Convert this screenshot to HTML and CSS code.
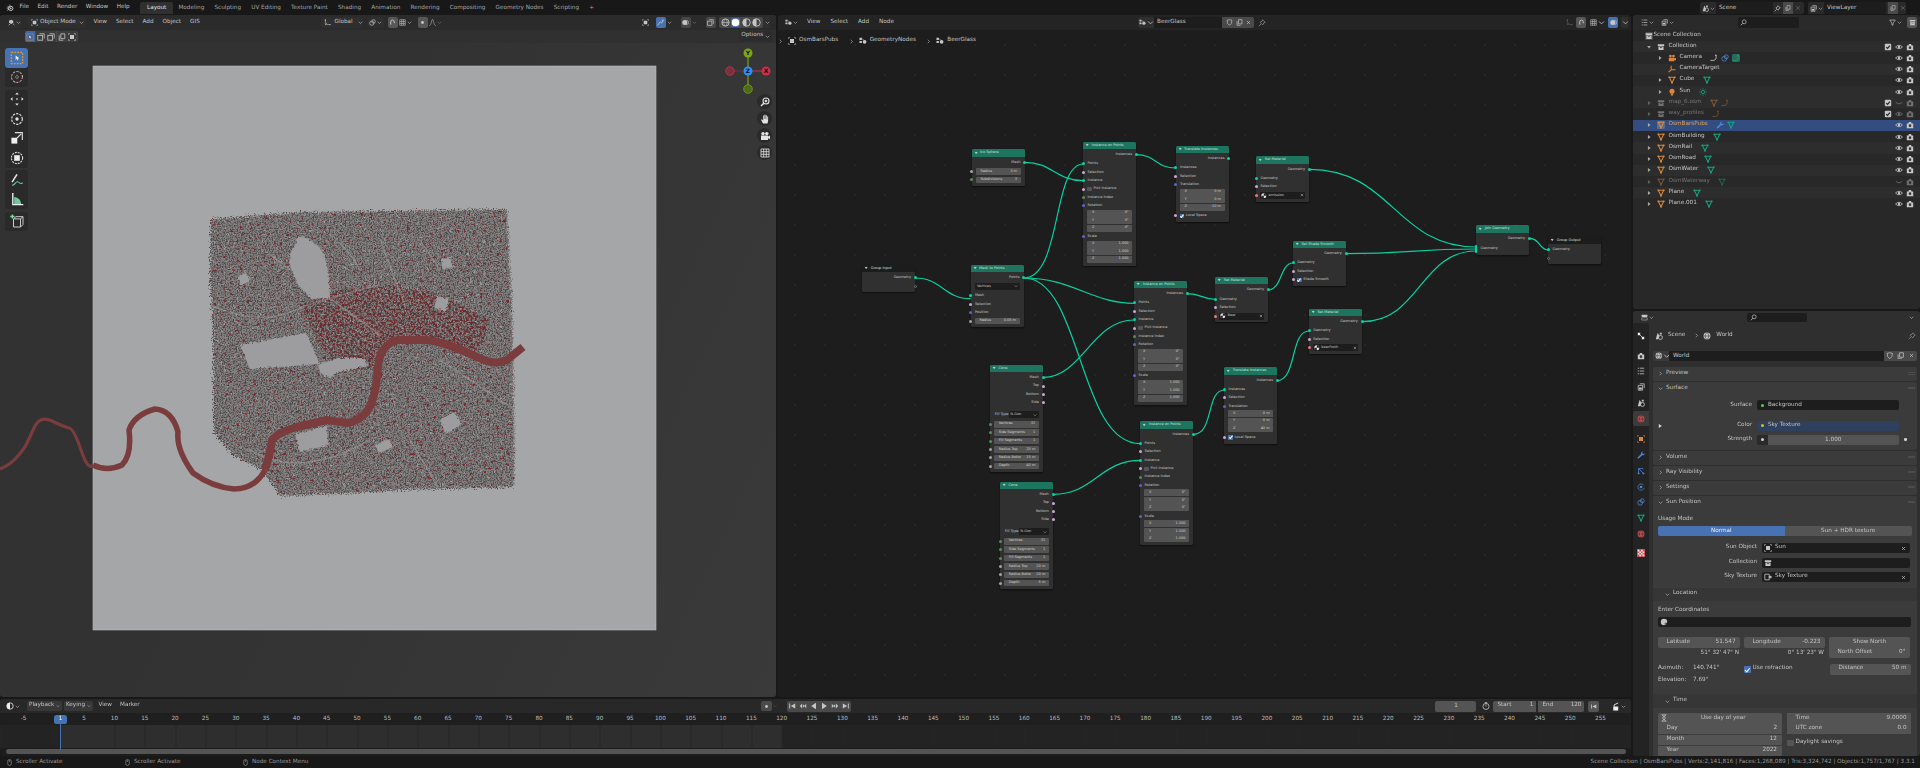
FILE: index.html
```html
<!DOCTYPE html>
<html lang="en">
<head>
<meta charset="utf-8">
<title>Blender</title>
<link rel="stylesheet" href="styles.css">
</head>
<body>
<svg class="sprite" aria-hidden="true">
<symbol id="collection" viewBox="0 0 10 10"><path fill="currentColor" d="M1 1.5h8v2.2H1zM1.8 4.3h6.4v4.5H1.8z"/><path fill="#222" d="M3.6 5.2h2.8V6H3.6z"/></symbol>
<symbol id="mesh" viewBox="0 0 10 10"><path fill="none" stroke="currentColor" stroke-width="1.3" d="M1.6 1.6h6.8L5 8.4z"/><circle cx="1.6" cy="1.6" r="1.1" fill="currentColor"/><circle cx="8.4" cy="1.6" r="1.1" fill="currentColor"/><circle cx="5" cy="8.4" r="1.1" fill="currentColor"/></symbol>
<symbol id="eye" viewBox="0 0 10 10"><path fill="none" stroke="currentColor" d="M.7 5Q5 .6 9.3 5 5 9.4.7 5z"/><circle cx="5" cy="5" r="1.5" fill="currentColor"/></symbol>
<symbol id="eyeoff" viewBox="0 0 10 10"><path fill="none" stroke="currentColor" d="M1 4Q5 8 9 4"/></symbol>
<symbol id="render" viewBox="0 0 10 10"><path fill="currentColor" d="M1 3h2l.7-1.7h2.6L7 3h2v6H1z"/><circle cx="5" cy="5.8" r="1.6" fill="#333"/></symbol>
<symbol id="check" viewBox="0 0 10 10"><rect x="1" y="1" width="8" height="8" rx="1.2" fill="currentColor"/><path fill="none" stroke="#222" stroke-width="1.4" d="M2.8 5.2l1.6 1.6 3-3.4"/></symbol>
<symbol id="cam" viewBox="0 0 10 10"><circle cx="3" cy="2.6" r="1.7" fill="currentColor"/><circle cx="6.8" cy="2.6" r="1.7" fill="currentColor"/><path fill="currentColor" d="M1 4.6h7V9H1zM8 5.6l2-1v3.6l-2-1z"/></symbol>
<symbol id="empty" viewBox="0 0 10 10"><path fill="none" stroke="currentColor" stroke-width="1.3" d="M4 .8V6M4 6h5.5M4 6L.8 9"/></symbol>
<symbol id="bulb" viewBox="0 0 10 10"><circle cx="5" cy="4" r="3.2" fill="currentColor"/><path fill="currentColor" d="M3.6 7.4h2.8v2H3.6z"/></symbol>
<symbol id="sun" viewBox="0 0 10 10"><circle cx="5" cy="5" r="2" fill="none" stroke="currentColor"/><path stroke="currentColor" stroke-width=".9" d="M5 .3v1.8M5 7.9v1.8M.3 5h1.8M7.9 5h1.8M1.7 1.7l1.2 1.2M7.1 7.1l1.2 1.2M8.3 1.7L7.1 2.9M2.9 7.1L1.7 8.3"/></symbol>
<symbol id="wrench" viewBox="0 0 10 10"><path fill="currentColor" d="M1 9.2L.8 8l4.3-4.3C4.7 2 5.8.4 7.8.6L6.4 2.2l.5 1.3 1.4.3L9.6 2.4c.3 2-1.5 3.3-3.2 2.8L2.2 9.3z"/></symbol>
<symbol id="curve" viewBox="0 0 10 10"><path fill="none" stroke="currentColor" stroke-width="1.1" d="M.6 8h3C7.5 8 8 5.5 7.5 1.5"/><circle cx="7.3" cy="1.5" r="1" fill="currentColor"/></symbol>
<symbol id="globe" viewBox="0 0 10 10"><circle cx="5" cy="5" r="4.3" fill="currentColor"/><path fill="none" stroke="#333" stroke-width=".7" d="M.8 5h8.4M5 .7c-3 2.8-3 5.8 0 8.6M5 .7c3 2.8 3 5.8 0 8.6"/></symbol>
<symbol id="scene" viewBox="0 0 10 10"><path fill="currentColor" d="M1 9l2.3-8.200L5.500 5 4 9z"/><circle cx="6.800" cy="6.800" r="2.500" fill="none" stroke="currentColor" stroke-width="1.100"/><path fill="currentColor" d="M6 .8h2.400v2.400H6z"/></symbol>
<symbol id="right" viewBox="0 0 10 10"><path fill="none" stroke="currentColor" stroke-width="1.100" d="M3.500 1.500L7 5 3.500 8.500"/></symbol>
<symbol id="down" viewBox="0 0 10 10"><path fill="none" stroke="currentColor" stroke-width="1.100" d="M1.500 3.500L5 7l3.500-3.500"/></symbol>
<symbol id="tri" viewBox="0 0 10 10"><path fill="currentColor" d="M3 1.500L8 5 3 8.500z"/></symbol>
<symbol id="tridown" viewBox="0 0 10 10"><path fill="currentColor" d="M1.500 3L5 8l3.500-5z"/></symbol>
<symbol id="shield" viewBox="0 0 10 10"><path fill="none" stroke="currentColor" d="M1.500 1.700Q5 .5 8.500 1.700 8.800 7 5 9 1.200 7 1.500 1.700z"/></symbol>
<symbol id="copy" viewBox="0 0 10 10"><path fill="none" stroke="currentColor" d="M3.500 1h5v6h-5zM1.500 3v6h5"/></symbol>
<symbol id="x" viewBox="0 0 10 10"><path stroke="currentColor" stroke-width="1.300" d="M2 2l6 6M8 2L2 8"/></symbol>
<symbol id="pin" viewBox="0 0 10 10"><path fill="none" stroke="currentColor" d="M5.800 1l3.200 3.200-1.600.6-1.500 2.600L2.600 4.100l2.600-1.500zM3.800 6.200L1 9"/></symbol>
<symbol id="search" viewBox="0 0 10 10"><circle cx="6" cy="4" r="2.800" fill="none" stroke="currentColor"/><path stroke="currentColor" stroke-width="1.200" d="M4 6.200L1.200 9"/></symbol>
<symbol id="filter" viewBox="0 0 10 10"><path fill="none" stroke="currentColor" d="M1 1.500h8L6 5.500 5.500 9 4.200 8.500 4 5.500z"/></symbol>
<symbol id="mat" viewBox="0 0 10 10"><circle cx="5" cy="5" r="4.500" fill="#e8e8e8"/><path fill="#222" d="M5 .5a4.500 4.500 0 0 1 4.500 4.500H5zM5 5v4.500A4.500 4.500 0 0 1 .5 5z"/></symbol>
<symbol id="nodes" viewBox="0 0 10 10"><path fill="currentColor" d="M.6 1h3v2.600h-3zM.6 5h3v2.600h-3z"/><circle cx="7" cy="6" r="2.300" fill="currentColor"/><path stroke="currentColor" stroke-width=".7" d="M3.600 2.300Q6 2.300 6 5"/></symbol>
<symbol id="obj" viewBox="0 0 10 10"><rect x="2.500" y="2.500" width="5" height="5" fill="currentColor"/><path fill="none" stroke="currentColor" stroke-width=".7" d="M.7 2.500V.7h1.800M7.500.7h1.800v1.800M9.300 7.500v1.800H7.500M2.500 9.300H.7V7.500"/></symbol>
<symbol id="tex" viewBox="0 0 10 10"><path fill="none" stroke="currentColor" d="M1 1.500h5.500v7H1z"/><path fill="currentColor" d="M6 4h2V2.800L10 5 8 7.200V6H6z"/></symbol>
<symbol id="select" viewBox="0 0 10 10"><rect x="1" y="1" width="8" height="8" fill="none" stroke="#d99a2e" stroke-dasharray="1.300 .8"/><path fill="#eee" d="M4 3.200l2.800 2-1.300.2.500 1.200-.6.2-.5-1.200-.9.900z"/></symbol>
<symbol id="cursor" viewBox="0 0 10 10"><circle cx="5" cy="5" r="3.900" fill="none" stroke="#e6e6e6" stroke-width=".7" stroke-dasharray="1.500 1"/><circle cx="5" cy="5" r="3.900" fill="none" stroke="#c8505a" stroke-width=".7" stroke-dasharray="1.500 4.600"/><path stroke="#ddd" stroke-width=".5" d="M5 3.500v1M5 5.500v1M3.500 5h1M5.500 5h1"/></symbol>
<symbol id="move" viewBox="0 0 10 10"><path fill="#e6e6e6" d="M5 .3l1.300 1.500H3.700zM5 9.700l1.300-1.500H3.700zM.3 5l1.500-1.300v2.600zM9.700 5L8.200 3.700v2.600zM4.500 4.500h1v1h-1z"/></symbol>
<symbol id="rotate" viewBox="0 0 10 10"><circle cx="5" cy="5" r="3.800" fill="none" stroke="#e6e6e6" stroke-width=".8" stroke-dasharray="1.600 .8"/><circle cx="5" cy="5" r="1.200" fill="#e6e6e6"/></symbol>
<symbol id="scale" viewBox="0 0 10 10"><rect x="1" y="4.800" width="4.200" height="4.200" fill="#eee"/><path fill="none" stroke="#ddd" stroke-width=".8" d="M3.500 1.200h5.300v5.300"/><path stroke="#ddd" stroke-width=".8" d="M5 5l3-3"/></symbol>
<symbol id="trans" viewBox="0 0 10 10"><circle cx="5" cy="5" r="4" fill="none" stroke="#ddd" stroke-width=".8" stroke-dasharray="1.400 .7"/><rect x="3" y="3" width="4" height="4" fill="#eee"/></symbol>
<symbol id="annot" viewBox="0 0 10 10"><path stroke="#e8e8e8" stroke-width="1.100" d="M1.500 6.500L5 1"/><path fill="none" stroke="#6fc9a0" stroke-width=".8" d="M1.500 8.500C3.500 9.500 4 5 6 6.500S7.500 8 9 7"/></symbol>
<symbol id="measure" viewBox="0 0 10 10"><path fill="#eee" d="M1.500.8h1v7.700h7v1h-8z"/><path fill="#6fc9a0" d="M3 3.500v5h5C7.800 6 6 3.800 3 3.500z"/></symbol>
<symbol id="addcube" viewBox="0 0 10 10"><path fill="none" stroke="#cfcfcf" stroke-width=".7" d="M2.500 3.500h5v5.800h-5zM2.500 3.500l1.800-1.600h5v5.600L7.500 9.300M7.500 3.500l1.800-1.600"/><path stroke="#7bdcaa" stroke-width="1" d="M1.700.3v3M.2 1.800h3"/></symbol>
<symbol id="tinytool" viewBox="0 0 10 10"><path fill="#eee" d="M1 1h3v3H1zM6 6h3v3H6z"/><path stroke="#eee" d="M4 4l2 2"/></symbol>
<symbol id="mouse" viewBox="0 0 10 10"><rect x="2.500" y=".8" width="5" height="8.400" rx="2.300" fill="none" stroke="currentColor" stroke-width=".8"/><path fill="currentColor" d="M4.500 1.800h1v2h-1z"/></symbol>
<symbol id="hourglass" viewBox="0 0 10 10"><path fill="none" stroke="currentColor" stroke-width=".9" d="M2 1h6M2 9h6M3 1c0 2.500 4 2.500 4 4S3 6.500 3 9M7 1c0 2.500-4 2.500-4 4s4 1.500 4 4"/></symbol>
<symbol id="stopwatch" viewBox="0 0 10 10"><circle cx="5" cy="5.500" r="3.800" fill="none" stroke="currentColor"/><path stroke="currentColor" d="M5 5.500V3M3.500 .8h3"/></symbol>
<symbol id="clockhalf" viewBox="0 0 10 10"><circle cx="5" cy="5" r="4" fill="none" stroke="currentColor"/><path fill="currentColor" d="M5 1a4 4 0 0 0 0 8z"/></symbol>
<symbol id="lockfile" viewBox="0 0 10 10"><path fill="currentColor" d="M2.500 5h5.500v4.500H2.500z"/><path fill="none" stroke="currentColor" d="M3.500 5V3.200L8 1"/></symbol>
<symbol id="jump1" viewBox="0 0 10 10"><path fill="currentColor" d="M1.500 2h1.200v6H1.500zM9 2v6L3.500 5z"/></symbol>
<symbol id="key1" viewBox="0 0 10 10"><path fill="currentColor" d="M1 5l3-3v6zM5 3l2.500 2L5 7zM9 2v6L7 5z"/></symbol>
<symbol id="play" viewBox="0 0 10 10"><path fill="currentColor" d="M2.500 1l6 4-6 4z"/></symbol>
<symbol id="back" viewBox="0 0 10 10"><path fill="currentColor" d="M7.500 1l-6 4 6 4z"/></symbol>
<symbol id="key2" viewBox="0 0 10 10"><path fill="currentColor" d="M9 5L6 2v6zM5 3L2.500 5 5 7zM1 2v6l2-3z"/></symbol>
<symbol id="jump2" viewBox="0 0 10 10"><path fill="currentColor" d="M8.500 2H7.300v6h1.200zM1 2v6l5.500-3z"/></symbol>
<symbol id="snap" viewBox="0 0 10 10"><path fill="none" stroke="currentColor" stroke-width="1.400" d="M2.500 8V4a2.500 2.500 0 0 1 5 0v2"/></symbol>
<symbol id="grid" viewBox="0 0 10 10"><path fill="none" stroke="currentColor" stroke-width=".8" d="M1 1h8v8H1zM3.700 1v8M6.300 1v8M1 3.700h8M1 6.300h8"/></symbol>
<symbol id="zoomi" viewBox="0 0 10 10"><circle cx="6" cy="4" r="3" fill="none" stroke="currentColor" stroke-width="1.100"/><path stroke="currentColor" stroke-width="1.500" d="M3.800 6.200L1 9M6 2.800v2.400M4.800 4h2.400"/></symbol>
<symbol id="hand" viewBox="0 0 10 10"><path fill="currentColor" d="M3 9.500L1 5.800l.8-.6 1.400 1.300V1.500h.9V5h.4V.7h1V5h.4V1.300h.9V5.500h.4V2.500h.9v4.300L7.500 9.500z"/></symbol>
<symbol id="orient" viewBox="0 0 10 10"><path fill="none" stroke="currentColor" stroke-width=".8" d="M2 1.500V8h6.500M2 8l2.600-2.600"/><circle cx="2" cy="1.500" r="1" fill="currentColor"/><circle cx="8.500" cy="8" r="1" fill="currentColor"/></symbol>
<symbol id="rings" viewBox="0 0 10 10"><circle cx="4" cy="6" r="3" fill="none" stroke="currentColor"/><circle cx="6.500" cy="3.500" r="2.500" fill="none" stroke="currentColor"/></symbol>
<symbol id="dotbox" viewBox="0 0 10 10"><circle cx="5" cy="5" r="2" fill="currentColor"/></symbol>
<symbol id="falloff" viewBox="0 0 10 10"><path fill="none" stroke="currentColor" stroke-width=".8" d="M.5 9.500C3.500 9 3.500.5 5 .5s1.500 8.500 4.500 9"/></symbol>
<symbol id="links" viewBox="0 0 10 10"><rect x="1" y="3" width="6" height="6" fill="none" stroke="currentColor"/><path fill="none" stroke="currentColor" d="M3 1h6v6"/></symbol>
<symbol id="gizmo" viewBox="0 0 10 10"><path fill="none" stroke="currentColor" stroke-width="1.200" d="M1 9l3.500-5 2 2L9 1"/><path fill="currentColor" d="M6.500 1H9v2.500z"/></symbol>
<symbol id="overlay" viewBox="0 0 10 10"><circle cx="4" cy="5" r="3.600" fill="currentColor"/><circle cx="6.500" cy="5" r="3" fill="none" stroke="currentColor" stroke-width=".8"/></symbol>
<symbol id="sphere" viewBox="0 0 10 10"><circle cx="5" cy="5" r="4.200" fill="currentColor"/></symbol>
<symbol id="spherewire" viewBox="0 0 10 10"><circle cx="5" cy="5" r="4" fill="none" stroke="currentColor"/><path fill="none" stroke="currentColor" stroke-width=".7" d="M1 5h8M5 1c-2.500 2-2.500 6 0 8M5 1c2.500 2 2.500 6 0 8"/></symbol>
<symbol id="half" viewBox="0 0 10 10"><circle cx="5" cy="5" r="4.200" fill="none" stroke="currentColor"/><path fill="currentColor" d="M5 .8a4.200 4.200 0 0 0 0 8.400z"/></symbol>
<symbol id="editor3d" viewBox="0 0 10 10"><path fill="currentColor" d="M1.500 2.500l3-1.500 3 1.500v3l-3 1.500-3-1.500z"/><path stroke="currentColor" d="M7 6.500l2 2M1 9l2-2"/></symbol>
<symbol id="blender" viewBox="0 0 10 10"><circle cx="6" cy="5.500" r="2.700" fill="none" stroke="currentColor" stroke-width="1.200"/><circle cx="6" cy="5.500" r="1" fill="currentColor"/><path stroke="currentColor" stroke-width="1" d="M.8 5l3.200.2M2 2.800l2.800 1.600M4 1l2.200 2.200M1.500 8l2.400-1.600"/></symbol>
<symbol id="list" viewBox="0 0 10 10"><path stroke="currentColor" stroke-width="1" d="M1 1.500h1.600M3.500 1.500H9M1 5h1.600M3.500 5H9M1 8.500h1.600M3.500 8.500H9"/></symbol>
<symbol id="viewlayer" viewBox="0 0 10 10"><path fill="none" stroke="currentColor" d="M3.500 1h5.500v5.500M1.500 3H7v6H1.500z"/><path fill="currentColor" d="M2.500 5.500h3.500v2.500H2.500z"/></symbol>
<symbol id="props" viewBox="0 0 10 10"><rect x="1" y="1" width="8" height="3.300" rx=".8" fill="currentColor"/><rect x="1" y="5.300" width="8" height="3.300" rx=".8" fill="none" stroke="currentColor" stroke-width=".8"/></symbol>
<symbol id="particles" viewBox="0 0 10 10"><path stroke="currentColor" d="M2 2l6 6M2 2v6M2 2h6"/><circle cx="8" cy="8" r="1.200" fill="currentColor"/><circle cx="2" cy="8" r="1.200" fill="currentColor"/></symbol>
<symbol id="physics" viewBox="0 0 10 10"><circle cx="5" cy="5" r="1.700" fill="currentColor"/><path fill="none" stroke="currentColor" stroke-width=".9" d="M8.500 3A4 4 0 1 0 9 6"/></symbol>
<symbol id="checker" viewBox="0 0 10 10"><rect width="10" height="10" fill="currentColor"/><path fill="#eee" d="M1 1h2v2H1zM5 1h2v2H5zM3 3h2v2H3zM7 3h2v2H7zM1 5h2v2H1zM5 5h2v2H5zM3 7h2v2H3zM7 7h2v2H7z"/></symbol>
<symbol id="latlon" viewBox="0 0 10 10"><circle cx="5" cy="5" r="4" fill="currentColor"/><path fill="#1d1d1d" d="M6 6h3v3H6z"/><path fill="currentColor" d="M6.500 6.500l2 1-2 1z"/></symbol>
</svg>
<div class="app">
  <header class="topbar">
    <svg class="i logo"><use href="#blender"/></svg>
    <nav class="mainmenu"><span>File</span><span>Edit</span><span>Render</span><span>Window</span><span>Help</span></nav>
    <nav class="tabs"><span class="tab on">Layout</span><span class="tab">Modeling</span><span class="tab">Sculpting</span><span class="tab">UV Editing</span><span class="tab">Texture Paint</span><span class="tab">Shading</span><span class="tab">Animation</span><span class="tab">Rendering</span><span class="tab">Compositing</span><span class="tab">Geometry Nodes</span><span class="tab">Scripting</span><span class="tab">+</span></nav>
    <div class="selector scenesel"><svg class="i"><use href="#scene"/></svg><svg class="i d"><use href="#down"/></svg><span class="input">Scene</span><svg class="i"><use href="#pin"/></svg><svg class="i ib"><use href="#copy"/></svg><svg class="i d2"><use href="#x"/></svg></div>
    <div class="selector layersel"><svg class="i"><use href="#viewlayer"/></svg><svg class="i d"><use href="#down"/></svg><span class="input">ViewLayer</span><svg class="i ib"><use href="#copy"/></svg><svg class="i d2"><use href="#x"/></svg></div>
  </header>

  <main class="work">
    <div class="left">
      <div class="upper">
        <section class="area view">
          <svg class="scene" viewBox="0 15 776 682" aria-hidden="true">
            <defs>
              <filter id="city" x="-4%" y="-4%" width="108%" height="108%" color-interpolation-filters="sRGB">
                <feTurbulence type="fractalNoise" baseFrequency=".75" numOctaves="2" seed="4" result="n"/>
                <feDisplacementMap in="SourceGraphic" in2="n" scale="9" xChannelSelector="R" yChannelSelector="G" result="shape"/>
                <feColorMatrix in="n" type="matrix" values="0 0 0 0 .3 0 0 0 0 .28 0 0 0 0 .29 3.600 0 0 0 -1.500" result="dark"/>
                <feComposite in="dark" in2="shape" operator="in" result="darkc"/>
                <feTurbulence type="fractalNoise" baseFrequency=".3" numOctaves="2" seed="11" result="m"/>
                <feColorMatrix in="m" type="matrix" values="0 0 0 0 .47 0 0 0 0 .15 0 0 0 0 .17 9 0 0 0 -5.900" result="red"/>
                <feComposite in="red" in2="shape" operator="in" result="redc"/>
                <feTurbulence type="fractalNoise" baseFrequency=".3" numOctaves="3" seed="21" result="h"/>
                <feColorMatrix in="h" type="matrix" values="0 0 0 0 .63 0 0 0 0 .63 0 0 0 0 .64 0 5 0 0 -2.900" result="holes"/>
                <feComposite in="holes" in2="shape" operator="in" result="holesc"/>
                <feMerge><feMergeNode in="shape"/><feMergeNode in="holesc"/><feMergeNode in="darkc"/><feMergeNode in="redc"/></feMerge>
              </filter>
              <filter id="core" x="-5%" y="-5%" width="110%" height="110%" color-interpolation-filters="sRGB">
                <feTurbulence type="fractalNoise" baseFrequency=".45" numOctaves="2" seed="8" result="c"/>
                <feColorMatrix in="c" type="matrix" values="0 0 0 0 .42 0 0 0 0 .16 0 0 0 0 .17 5 0 0 0 -2.300" result="cr"/>
                <feComposite in="cr" in2="SourceGraphic" operator="in"/>
              </filter>
              <filter id="rough" x="-10%" y="-10%" width="120%" height="120%">
                <feTurbulence type="fractalNoise" baseFrequency=".5" numOctaves="2" seed="2" result="p"/>
                <feDisplacementMap in="SourceGraphic" in2="p" scale="4" xChannelSelector="R" yChannelSelector="G"/>
              </filter>
            </defs>
            <rect class="plane" x="93" y="66" width="563" height="564"/>
            <path class="city" filter="url(#city)" d="M211 219L300 212 400 211 507 209 512 300 514 400 515 470 514 487 400 490 340 494 280 496 262 470 232 455 214 432 213 330 210 280z"/>
            <path class="core" filter="url(#core)" d="M300 305L340 290 390 285 440 295 490 320 480 350 430 340 395 338 382 350 375 370 340 370 320 345z"/>
            <g filter="url(#rough)">
              <path class="park" d="M290 266C288 246 300 245 296 240 300 232 315 242 322 250 328 262 330 285 330 298L312 299 298 285z"/>
              <path class="park" d="M240 345L306 333 320 364 250 369z"/>
              <path class="park" d="M318 365L338 358 363 358 368 366 338 372 330 378 320 372z"/>
              <path class="park" d="M295 434L327 426 328 445 300 452z"/>
              <path class="park" d="M437 296l12 3-3 12-12-3zM441 259l8-2 4 10-10 2zM238 276l8-3 4 8-9 4zM375 445l14-6 4 8-14 6zM440 420l14-8 8 12-16 10z"/>
            </g>
            <path class="street" d="M212 306Q260 325 290 312T380 285M335 240Q350 250 360 270M380 240L405 305M270 255L380 335M250 450Q300 480 370 440M420 240L440 270M440 360L515 410M410 440L440 490"/>
            <path class="rv" d="M0 469Q10 465 17 457T26 445 34 428 52 421 69 428 81 450 93 465"/>
            <path class="rv2" d="M93 465Q107 472 122 465 132 455 129 430 134 415 155 409 172 410 178 432 176 450 193 473 212 487 234 489 255 489 265 470"/>
            <path class="rv3" d="M265 470Q270 455 272 440 278 432 297 427L327 420 347 423Q365 420 372 402 377 385 378 367 380 345 397 340H427Q445 342 477 357 495 366 507 360L523 347"/>
          </svg>

          <header class="vh">
            <span class="hb w12"><svg class="i"><use href="#editor3d"/></svg><svg class="i c5"><use href="#down"/></svg></span>
            <span class="hb modesel"><svg class="i"><use href="#obj"/></svg>Object Mode<svg class="i c5 push"><use href="#down"/></svg></span>
            <nav class="menus"><span>View</span><span>Select</span><span>Add</span><span>Object</span><span>GIS</span></nav>
            <span class="hb glob"><svg class="i"><use href="#orient"/></svg>Global<svg class="i c5 push"><use href="#down"/></svg></span>
            <span class="hb w16"><svg class="i"><use href="#rings"/></svg><svg class="i c5"><use href="#down"/></svg></span>
            <span class="hb w10 lit"><svg class="i"><use href="#snap"/></svg></span>
            <span class="hb w16 flat"><svg class="i"><use href="#grid"/></svg><svg class="i c5"><use href="#down"/></svg></span>
            <span class="hb w10 lit"><svg class="i"><use href="#dotbox"/></svg></span>
            <span class="hb w16 flat"><svg class="i"><use href="#falloff"/></svg><svg class="i c5 dim"><use href="#down"/></svg></span>
            <span class="hb w10 flat rpush"><svg class="i"><use href="#obj"/></svg></span>
            <span class="hb w10 blue"><svg class="i"><use href="#gizmo"/></svg></span>
            <span class="hb c5w flat"><svg class="i c5"><use href="#down"/></svg></span>
            <span class="hb w10 lit2"><svg class="i"><use href="#overlay"/></svg></span>
            <span class="hb c5w flat dim"><svg class="i c5"><use href="#down"/></svg></span>
            <span class="hb w10 lit2"><svg class="i"><use href="#links"/></svg></span>
            <span class="shade"><svg class="i"><use href="#spherewire"/></svg><svg class="i sel"><use href="#sphere"/></svg><svg class="i"><use href="#half"/></svg><svg class="i"><use href="#half"/></svg></span>
            <span class="hb c5w"><svg class="i c5"><use href="#down"/></svg></span>
          </header>
          <div class="vtool">
            <div class="selmodes"><span class="on"><svg class="i"><use href="#select"/></svg></span><span><svg class="i"><use href="#links"/></svg></span><span><svg class="i"><use href="#links"/></svg></span><span><svg class="i"><use href="#copy"/></svg></span><span><svg class="i"><use href="#obj"/></svg></span></div>
          </div>
          <div class="tools">
            <div class="tg"><span class="tool on"><svg class="t"><use href="#select"/></svg></span><span class="tool"><svg class="t"><use href="#cursor"/></svg></span></div>
            <div class="tg"><span class="tool"><svg class="t"><use href="#move"/></svg></span><span class="tool"><svg class="t"><use href="#rotate"/></svg></span><span class="tool"><svg class="t"><use href="#scale"/></svg></span><span class="tool"><svg class="t"><use href="#trans"/></svg></span></div>
            <div class="tg"><span class="tool"><svg class="t"><use href="#annot"/></svg></span><span class="tool"><svg class="t"><use href="#measure"/></svg></span></div>
            <div class="tg"><span class="tool"><svg class="t"><use href="#addcube"/></svg></span></div>
          </div>
          <div class="opts">Options<svg class="i c5"><use href="#down"/></svg></div>
          <svg class="axes" viewBox="0 0 52 52" aria-hidden="true">
            <path stroke="#c8304a" stroke-width="1.200" d="M26 26H44"/><path stroke="#6f3040" stroke-width="1.200" d="M26 26H8"/>
            <path stroke="#79a313" stroke-width="1.200" d="M26 26V8M26 26V44"/>
            <circle cx="8" cy="26" r="4.300" fill="#78323f" stroke="#c8304a" stroke-width=".8"/>
            <circle cx="26" cy="44" r="4.300" fill="#4c6a1c" stroke="#79a313" stroke-width=".8"/>
            <circle cx="44" cy="26" r="4.500" fill="#cc2f4c"/><circle cx="26" cy="8" r="4.500" fill="#7aa815"/><circle cx="26" cy="26" r="4.500" fill="#2c8fff"/>
            <text x="44" y="28">X</text><text x="26" y="10">Y</text><text x="26" y="28">Z</text>
          </svg>
          <div class="nav3d"><span><svg class="i"><use href="#zoomi"/></svg></span><span><svg class="i"><use href="#hand"/></svg></span><span><svg class="i"><use href="#cam"/></svg></span><span><svg class="i"><use href="#grid"/></svg></span></div>
        </section>

        <section class="area nodeed">
          <div class="canvas">
            <svg class="links" viewBox="0 0 1920 768" aria-hidden="true">
              <path d="M915 278C942 278 944 298.700 970.700 298.700"/>
              <path d="M1023.700 278C1062 278 1052 164 1083.300 164"/>
              <path d="M1023.700 278C1072 278 1092 303.300 1134.300 303.300"/>
              <path d="M1023.700 278C1082 278 1078 443.700 1140.300 443.700"/>
              <path d="M1024.700 162.300C1052 162.300 1056 180.700 1083.300 180.700"/>
              <path d="M1043.300 377.300C1082 377.300 1092 320 1134.300 320"/>
              <path d="M1053.300 494.300C1094 494.300 1100 460.300 1140.300 460.300"/>
              <path d="M1136 154.700C1156 154.700 1156 168 1175.700 168"/>
              <path d="M1187 293.700C1202 293.700 1202 299.300 1215.300 299.300"/>
              <path d="M1193.300 434.300C1214 434.300 1206 390 1224.300 390"/>
              <path d="M1276.700 380.700C1297 380.700 1290 331 1309 331"/>
              <path d="M1268.300 290C1282 290 1280 263 1293 263"/>
              <path d="M1309.300 169.300C1392 169.300 1396 247 1476.300 247"/>
              <path d="M1346 253.700C1410 253.700 1412 249 1476.300 249"/>
              <path d="M1362 321.700C1420 321.700 1420 251 1476.300 251"/>
              <path d="M1529.700 238.300C1540 238.300 1539 250 1548.300 250"/>
            </svg>

            <article class="node n-ico"><div class="nh"><i class="nc"></i>Ico Sphere</div><div class="nb">
              <div class="r o"><b class="s sg"></b>Mesh</div>
              <div class="r"><b class="s sf"></b><span class="f"><span>Radius</span><span>3 m</span></span></div>
              <div class="r"><b class="s si"></b><span class="f"><span>Subdivisions</span><span>3</span></span></div>
            </div></article>

            <article class="node n-gi"><div class="nh dark"><i class="nc"></i>Group Input</div><div class="nb">
              <div class="r o"><b class="s sg"></b>Geometry</div>
              <div class="r o"><b class="s hollow"></b></div>
            </div></article>

            <article class="node n-mtp"><div class="nh"><i class="nc"></i>Mesh to Points</div><div class="nb">
              <div class="r o"><b class="s sg"></b>Points</div>
              <div class="drop"><span>Vertices</span><svg class="i c4"><use href="#down"/></svg></div>
              <div class="r"><b class="s sg"></b>Mesh</div>
              <div class="r"><b class="s sb"></b>Selection</div>
              <div class="r"><b class="s sv"></b>Position</div>
              <div class="r"><b class="s sf"></b><span class="f"><span>Radius</span><span>0.05 m</span></span></div>
            </div></article>

            <article class="node n-iop1"><div class="nh"><i class="nc"></i>Instance on Points</div><div class="nb">
              <div class="r o"><b class="s sg"></b>Instances</div>
              <div class="r"><b class="s sg"></b>Points</div>
              <div class="r"><b class="s sb"></b>Selection</div>
              <div class="r"><b class="s sg"></b>Instance</div>
              <div class="r"><b class="s sb"></b><i class="cb"></i>Pick Instance</div>
              <div class="r"><b class="s si"></b>Instance Index</div>
              <div class="r"><b class="s sv"></b>Rotation</div>
              <div class="vec"><span class="f"><span>X</span><span>0°</span></span><span class="f"><span>Y</span><span>0°</span></span><span class="f"><span>Z</span><span>0°</span></span></div>
              <div class="r"><b class="s sv"></b>Scale</div>
              <div class="vec"><span class="f"><span>X</span><span>1.000</span></span><span class="f"><span>Y</span><span>1.000</span></span><span class="f"><span>Z</span><span>1.000</span></span></div>
            </div></article>

            <article class="node n-tr1"><div class="nh"><i class="nc"></i>Translate Instances</div><div class="nb">
              <div class="r o"><b class="s sg"></b>Instances</div>
              <div class="r"><b class="s sg"></b>Instances</div>
              <div class="r"><b class="s sb"></b>Selection</div>
              <div class="r"><b class="s sv"></b>Translation</div>
              <div class="vec"><span class="f"><span>X</span><span>0 m</span></span><span class="f"><span>Y</span><span>0 m</span></span><span class="f"><span>Z</span><span>-10 m</span></span></div>
              <div class="r"><b class="s sb"></b><i class="cb on"></i>Local Space</div>
            </div></article>

            <article class="node n-iop2"><div class="nh"><i class="nc"></i>Instance on Points</div><div class="nb">
              <div class="r o"><b class="s sg"></b>Instances</div>
              <div class="r"><b class="s sg"></b>Points</div>
              <div class="r"><b class="s sb"></b>Selection</div>
              <div class="r"><b class="s sg"></b>Instance</div>
              <div class="r"><b class="s sb"></b><i class="cb"></i>Pick Instance</div>
              <div class="r"><b class="s si"></b>Instance Index</div>
              <div class="r"><b class="s sv"></b>Rotation</div>
              <div class="vec"><span class="f"><span>X</span><span>0°</span></span><span class="f"><span>Y</span><span>0°</span></span><span class="f"><span>Z</span><span>0°</span></span></div>
              <div class="r"><b class="s sv"></b>Scale</div>
              <div class="vec"><span class="f"><span>X</span><span>1.000</span></span><span class="f"><span>Y</span><span>1.000</span></span><span class="f"><span>Z</span><span>1.000</span></span></div>
            </div></article>

            <article class="node n-iop3"><div class="nh"><i class="nc"></i>Instance on Points</div><div class="nb">
              <div class="r o"><b class="s sg"></b>Instances</div>
              <div class="r"><b class="s sg"></b>Points</div>
              <div class="r"><b class="s sb"></b>Selection</div>
              <div class="r"><b class="s sg"></b>Instance</div>
              <div class="r"><b class="s sb"></b><i class="cb"></i>Pick Instance</div>
              <div class="r"><b class="s si"></b>Instance Index</div>
              <div class="r"><b class="s sv"></b>Rotation</div>
              <div class="vec"><span class="f"><span>X</span><span>0°</span></span><span class="f"><span>Y</span><span>0°</span></span><span class="f"><span>Z</span><span>0°</span></span></div>
              <div class="r"><b class="s sv"></b>Scale</div>
              <div class="vec"><span class="f"><span>X</span><span>1.000</span></span><span class="f"><span>Y</span><span>1.000</span></span><span class="f"><span>Z</span><span>1.000</span></span></div>
            </div></article>

            <article class="node n-cone1"><div class="nh"><i class="nc"></i>Cone</div><div class="nb">
              <div class="r o"><b class="s sg"></b>Mesh</div>
              <div class="r o"><b class="s sb"></b>Top</div>
              <div class="r o"><b class="s sb"></b>Bottom</div>
              <div class="r o"><b class="s sb"></b>Side</div>
              <div class="drop labeled"><em>Fill Type</em><span class="ddv"><span>N-Gon</span><svg class="i c4"><use href="#down"/></svg></span></div>
              <div class="r"><b class="s si"></b><span class="f"><span>Vertices</span><span>32</span></span></div>
              <div class="r"><b class="s si"></b><span class="f"><span>Side Segments</span><span>1</span></span></div>
              <div class="r"><b class="s si"></b><span class="f"><span>Fill Segments</span><span>1</span></span></div>
              <div class="r"><b class="s sf"></b><span class="f"><span>Radius Top</span><span>20 m</span></span></div>
              <div class="r"><b class="s sf"></b><span class="f"><span>Radius Botto</span><span>15 m</span></span></div>
              <div class="r"><b class="s sf"></b><span class="f"><span>Depth</span><span>40 m</span></span></div>
            </div></article>

            <article class="node n-cone2"><div class="nh"><i class="nc"></i>Cone</div><div class="nb">
              <div class="r o"><b class="s sg"></b>Mesh</div>
              <div class="r o"><b class="s sb"></b>Top</div>
              <div class="r o"><b class="s sb"></b>Bottom</div>
              <div class="r o"><b class="s sb"></b>Side</div>
              <div class="drop labeled"><em>Fill Type</em><span class="ddv"><span>N-Gon</span><svg class="i c4"><use href="#down"/></svg></span></div>
              <div class="r"><b class="s si"></b><span class="f"><span>Vertices</span><span>32</span></span></div>
              <div class="r"><b class="s si"></b><span class="f"><span>Side Segments</span><span>1</span></span></div>
              <div class="r"><b class="s si"></b><span class="f"><span>Fill Segments</span><span>1</span></span></div>
              <div class="r"><b class="s sf"></b><span class="f"><span>Radius Top</span><span>20 m</span></span></div>
              <div class="r"><b class="s sf"></b><span class="f"><span>Radius Botto</span><span>20 m</span></span></div>
              <div class="r"><b class="s sf"></b><span class="f"><span>Depth</span><span>5 m</span></span></div>
            </div></article>

            <article class="node n-tr2"><div class="nh"><i class="nc"></i>Translate Instances</div><div class="nb">
              <div class="r o"><b class="s sg"></b>Instances</div>
              <div class="r"><b class="s sg"></b>Instances</div>
              <div class="r"><b class="s sb"></b>Selection</div>
              <div class="r"><b class="s sv"></b>Translation</div>
              <div class="vec"><span class="f"><span>X</span><span>0 m</span></span><span class="f"><span>Y</span><span>0 m</span></span><span class="f"><span>Z</span><span>40 m</span></span></div>
              <div class="r"><b class="s sb"></b><i class="cb on"></i>Local Space</div>
            </div></article>

            <article class="node n-sm1"><div class="nh"><i class="nc"></i>Set Material</div><div class="nb">
              <div class="r o"><b class="s sg"></b>Geometry</div>
              <div class="r"><b class="s sg"></b>Geometry</div>
              <div class="r"><b class="s sb"></b>Selection</div>
              <div class="r"><b class="s sm"></b><span class="mf"><svg class="i c5w2"><use href="#mat"/></svg><span>emission</span><svg class="i c4 mx"><use href="#x"/></svg></span></div>
            </div></article>

            <article class="node n-sm2"><div class="nh"><i class="nc"></i>Set Material</div><div class="nb">
              <div class="r o"><b class="s sg"></b>Geometry</div>
              <div class="r"><b class="s sg"></b>Geometry</div>
              <div class="r"><b class="s sb"></b>Selection</div>
              <div class="r"><b class="s sm"></b><span class="mf"><svg class="i c5w2"><use href="#mat"/></svg><span>Beer</span><svg class="i c4 mx"><use href="#x"/></svg></span></div>
            </div></article>

            <article class="node n-sm3"><div class="nh"><i class="nc"></i>Set Material</div><div class="nb">
              <div class="r o"><b class="s sg"></b>Geometry</div>
              <div class="r"><b class="s sg"></b>Geometry</div>
              <div class="r"><b class="s sb"></b>Selection</div>
              <div class="r"><b class="s sm"></b><span class="mf"><svg class="i c5w2"><use href="#mat"/></svg><span>beerFroth</span><svg class="i c4 mx"><use href="#x"/></svg></span></div>
            </div></article>

            <article class="node n-sss"><div class="nh"><i class="nc"></i>Set Shade Smooth</div><div class="nb">
              <div class="r o"><b class="s sg"></b>Geometry</div>
              <div class="r"><b class="s sg"></b>Geometry</div>
              <div class="r"><b class="s sb"></b>Selection</div>
              <div class="r"><b class="s sb"></b><i class="cb on"></i>Shade Smooth</div>
            </div></article>

            <article class="node n-join"><div class="nh"><i class="nc"></i>Join Geometry</div><div class="nb jb">
              <div class="r o"><b class="s sg"></b>Geometry</div>
              <div class="r"><b class="s sg multi"></b>Geometry</div>
            </div></article>

            <article class="node n-go"><div class="nh dark"><i class="nc"></i>Group Output</div><div class="nb">
              <div class="r"><b class="s sg"></b>Geometry</div>
              <div class="r"><b class="s hollow"></b></div>
            </div></article>
          </div>

          <header class="nh-bar">
            <span class="hb w16 flat"><svg class="i"><use href="#nodes"/></svg><svg class="i c5"><use href="#down"/></svg></span>
            <nav class="menus nm"><span>View</span><span>Select</span><span>Add</span><span>Node</span></nav>
            <div class="dblock"><span class="di"><svg class="i"><use href="#nodes"/></svg><svg class="i c5"><use href="#down"/></svg></span><span class="dn">BeerGlass</span><span class="dbtn"><svg class="i"><use href="#shield"/></svg><svg class="i"><use href="#copy"/></svg><svg class="i c6"><use href="#x"/></svg></span></div>
            <svg class="i pinn"><use href="#pin"/></svg>
            <span class="rgrp"><svg class="i fade"><use href="#orient"/></svg><span class="hb w10 lit"><svg class="i"><use href="#snap"/></svg></span><span class="hb w16 flat"><svg class="i"><use href="#grid"/></svg><svg class="i c5"><use href="#down"/></svg></span><span class="hb w10 blue"><svg class="i"><use href="#overlay"/></svg></span><span class="hb c5w"><svg class="i c5"><use href="#down"/></svg></span></span>
          </header>
          <div class="crumbs"><svg class="i c5"><use href="#right"/></svg><svg class="i"><use href="#obj"/></svg><span>OsmBarsPubs</span><svg class="i c5"><use href="#right"/></svg><svg class="i"><use href="#nodes"/></svg><span>GeometryNodes</span><svg class="i c5"><use href="#right"/></svg><svg class="i"><use href="#nodes"/></svg><span>BeerGlass</span></div>
        </section>
      </div>

      <section class="area timeline">
        <header class="th">
          <span class="thl"><svg class="i ed"><use href="#clockhalf"/></svg><svg class="i c5"><use href="#down"/></svg></span>
          <span class="pop">Playback<svg class="i c4"><use href="#down"/></svg></span>
          <span class="pop">Keying<svg class="i c4"><use href="#down"/></svg></span>
          <nav class="menus tm"><span>View</span><span>Marker</span></nav>
          <span class="rec"><svg class="i"><use href="#dotbox"/></svg></span><svg class="i c4 dimmer"><use href="#down"/></svg>
          <span class="transport"><svg class="i"><use href="#jump1"/></svg><svg class="i"><use href="#key1"/></svg><svg class="i"><use href="#back"/></svg><svg class="i"><use href="#play"/></svg><svg class="i"><use href="#key2"/></svg><svg class="i"><use href="#jump2"/></svg></span>
          <span class="frame">1</span>
          <svg class="i sw"><use href="#stopwatch"/></svg>
          <span class="se"><span>Start</span><span>1</span></span>
          <span class="se e"><span>End</span><span>120</span></span>
          <span class="rng"><svg class="i"><use href="#jump1"/></svg></span>
          <span class="lk"><svg class="i"><use href="#lockfile"/></svg><svg class="i c5"><use href="#down"/></svg></span>
        </header>
        <div class="ruler"><span>-5</span><span></span><span>5</span><span>10</span><span>15</span><span>20</span><span>25</span><span>30</span><span>35</span><span>40</span><span>45</span><span>50</span><span>55</span><span>60</span><span>65</span><span>70</span><span>75</span><span>80</span><span>85</span><span>90</span><span>95</span><span>100</span><span>105</span><span>110</span><span>115</span><span>120</span><span>125</span><span>130</span><span>135</span><span>140</span><span>145</span><span>150</span><span>155</span><span>160</span><span>165</span><span>170</span><span>175</span><span>180</span><span>185</span><span>190</span><span>195</span><span>200</span><span>205</span><span>210</span><span>215</span><span>220</span><span>225</span><span>230</span><span>235</span><span>240</span><span>245</span><span>250</span><span>255</span></div>
        <div class="tracks"></div>
        <div class="scroller"></div>
        <div class="playhead"><span>1</span></div>
      </section>
    </div>

    <aside class="right">
      <section class="area outliner">
        <header class="oh"><span class="hb w16 flat"><svg class="i"><use href="#list"/></svg><svg class="i c5"><use href="#down"/></svg></span><span class="hb w16 flat"><svg class="i"><use href="#viewlayer"/></svg><svg class="i c5"><use href="#down"/></svg></span><span class="osearch"><svg class="i"><use href="#search"/></svg></span><span class="hb w16 flat"><svg class="i"><use href="#filter"/></svg><svg class="i c5"><use href="#down"/></svg></span><span class="hb w10 lit"><svg class="i"><use href="#collection"/></svg></span></header>
        <div class="otree">
          <div class="row l0"><svg class="i wbox"><use href="#collection"/></svg><span class="nm">Scene Collection</span></div>
          <div class="row l1"><svg class="ar"><use href="#tridown"/></svg><svg class="i"><use href="#collection"/></svg><span class="nm">Collection</span><span class="rt"><svg class="i"><use href="#check"/></svg><svg class="i"><use href="#eye"/></svg><svg class="i"><use href="#render"/></svg></span></div>
          <div class="kids">
            <div class="row l2"><svg class="ar"><use href="#tri"/></svg><svg class="i org"><use href="#cam"/></svg><span class="nm">Camera</span><span class="chips"><svg class="i"><use href="#curve"/></svg><svg class="i blu"><use href="#rings"/></svg><svg class="i grn chipbox"><use href="#curve"/></svg></span><span class="rt"><svg class="i"><use href="#eye"/></svg><svg class="i"><use href="#render"/></svg></span></div>
            <div class="row l2 noar"><svg class="i org"><use href="#empty"/></svg><span class="nm">CameraTarget</span><span class="rt"><svg class="i"><use href="#eye"/></svg><svg class="i"><use href="#render"/></svg></span></div>
            <div class="row l2"><svg class="ar"><use href="#tri"/></svg><svg class="i org"><use href="#mesh"/></svg><span class="nm">Cube</span><span class="chips"><svg class="i grn"><use href="#mesh"/></svg></span><span class="rt"><svg class="i"><use href="#eye"/></svg><svg class="i"><use href="#render"/></svg></span></div>
            <div class="row l2"><svg class="ar"><use href="#tri"/></svg><svg class="i org"><use href="#bulb"/></svg><span class="nm">Sun</span><span class="chips"><svg class="i grn"><use href="#sun"/></svg></span><span class="rt"><svg class="i"><use href="#eye"/></svg><svg class="i"><use href="#render"/></svg></span></div>
          </div>
          <div class="row l1 dim"><svg class="ar"><use href="#tri"/></svg><svg class="i"><use href="#collection"/></svg><span class="nm">map_6.osm</span><span class="chips"><svg class="i org"><use href="#mesh"/></svg><svg class="i org"><use href="#curve"/></svg></span><span class="rt"><svg class="i bright"><use href="#check"/></svg><svg class="i"><use href="#eyeoff"/></svg><svg class="i"><use href="#render"/></svg></span></div>
          <div class="row l1 dim"><svg class="ar"><use href="#tri"/></svg><svg class="i"><use href="#collection"/></svg><span class="nm">way_profiles</span><span class="chips"><svg class="i org"><use href="#curve"/></svg></span><span class="rt"><svg class="i bright"><use href="#check"/></svg><svg class="i"><use href="#eye"/></svg><svg class="i"><use href="#render"/></svg></span></div>
          <div class="row l1 active"><svg class="ar"><use href="#tri"/></svg><svg class="i org icbox"><use href="#mesh"/></svg><span class="nm">OsmBarsPubs</span><span class="chips"><svg class="i blu"><use href="#wrench"/></svg><svg class="i grn"><use href="#mesh"/></svg></span><span class="rt"><svg class="i"><use href="#eye"/></svg><svg class="i"><use href="#render"/></svg></span></div>
          <div class="row l1"><svg class="ar"><use href="#tri"/></svg><svg class="i org"><use href="#mesh"/></svg><span class="nm">OsmBuilding</span><span class="chips"><svg class="i grn"><use href="#mesh"/></svg></span><span class="rt"><svg class="i"><use href="#eye"/></svg><svg class="i"><use href="#render"/></svg></span></div>
          <div class="row l1"><svg class="ar"><use href="#tri"/></svg><svg class="i org"><use href="#mesh"/></svg><span class="nm">OsmRail</span><span class="chips"><svg class="i grn"><use href="#mesh"/></svg></span><span class="rt"><svg class="i"><use href="#eye"/></svg><svg class="i"><use href="#render"/></svg></span></div>
          <div class="row l1"><svg class="ar"><use href="#tri"/></svg><svg class="i org"><use href="#mesh"/></svg><span class="nm">OsmRoad</span><span class="chips"><svg class="i grn"><use href="#mesh"/></svg></span><span class="rt"><svg class="i"><use href="#eye"/></svg><svg class="i"><use href="#render"/></svg></span></div>
          <div class="row l1"><svg class="ar"><use href="#tri"/></svg><svg class="i org"><use href="#mesh"/></svg><span class="nm">OsmWater</span><span class="chips"><svg class="i grn"><use href="#mesh"/></svg></span><span class="rt"><svg class="i"><use href="#eye"/></svg><svg class="i"><use href="#render"/></svg></span></div>
          <div class="row l1 dim"><svg class="ar"><use href="#tri"/></svg><svg class="i org"><use href="#mesh"/></svg><span class="nm">OsmWaterway</span><span class="chips"><svg class="i grn"><use href="#mesh"/></svg></span><span class="rt"><svg class="i"><use href="#eyeoff"/></svg><svg class="i"><use href="#render"/></svg></span></div>
          <div class="row l1"><svg class="ar"><use href="#tri"/></svg><svg class="i org"><use href="#mesh"/></svg><span class="nm">Plane</span><span class="chips"><svg class="i grn"><use href="#mesh"/></svg></span><span class="rt"><svg class="i"><use href="#eye"/></svg><svg class="i"><use href="#render"/></svg></span></div>
          <div class="row l1"><svg class="ar"><use href="#tri"/></svg><svg class="i org"><use href="#mesh"/></svg><span class="nm">Plane.001</span><span class="chips"><svg class="i grn"><use href="#mesh"/></svg></span><span class="rt"><svg class="i"><use href="#eye"/></svg><svg class="i"><use href="#render"/></svg></span></div>
        </div>
      </section>

      <section class="area props">
        <header class="ph"><span class="hb w16"><svg class="i"><use href="#props"/></svg><svg class="i c5"><use href="#down"/></svg></span><span class="psearch"><svg class="i"><use href="#search"/></svg></span><span class="hb w10"><svg class="i c5"><use href="#down"/></svg></span></header>
        <div class="pbody">
          <nav class="ptabs">
            <svg class="i tb first"><use href="#tinytool"/></svg>
            <svg class="i tb gap"><use href="#render"/></svg>
            <svg class="i tb"><use href="#list"/></svg>
            <svg class="i tb"><use href="#viewlayer"/></svg>
            <svg class="i tb"><use href="#scene"/></svg>
            <span class="tbon"><svg class="i red"><use href="#globe"/></svg></span>
            <svg class="i tb org gap"><use href="#obj"/></svg>
            <svg class="i tb blu"><use href="#wrench"/></svg>
            <svg class="i tb blu"><use href="#particles"/></svg>
            <svg class="i tb blu"><use href="#physics"/></svg>
            <svg class="i tb blu"><use href="#rings"/></svg>
            <svg class="i tb grn"><use href="#mesh"/></svg>
            <svg class="i tb red"><use href="#globe"/></svg>
            <svg class="i tb red gap"><use href="#checker"/></svg>
          </nav>
          <div class="pcontent">
            <div class="pcrumb"><svg class="i"><use href="#scene"/></svg><span>Scene</span><svg class="i c5"><use href="#right"/></svg><svg class="i"><use href="#globe"/></svg><span>World</span><svg class="i ppin"><use href="#pin"/></svg></div>
            <div class="wsel"><span class="wi"><svg class="i"><use href="#globe"/></svg><svg class="i c5"><use href="#down"/></svg></span><span class="wn">World</span><span class="wb"><svg class="i"><use href="#shield"/></svg><svg class="i"><use href="#copy"/></svg><svg class="i c6"><use href="#x"/></svg></span></div>

            <div class="pn closed"><svg class="i c5"><use href="#right"/></svg>Preview<i class="grip"></i></div>
            <div class="pn open surf">
              <div class="pnh"><svg class="i c5"><use href="#down"/></svg>Surface<i class="grip"></i></div>
              <div class="fr"><label>Surface</label><span class="dk"><b class="dot dg"></b>Background</span></div>
              <div class="fr m10"><svg class="marker"><use href="#tri"/></svg><label>Color</label><span class="dk lnk"><b class="dot dy"></b>Sky Texture</span></div>
              <div class="fr m4"><label>Strength</label><span class="strength"><b class="sdot"><b class="dot dw"></b></b><span class="sval">1.000</span></span><b class="dot dw after"></b></div>
            </div>
            <div class="pn closed"><svg class="i c5"><use href="#right"/></svg>Volume<i class="grip"></i></div>
            <div class="pn closed"><svg class="i c5"><use href="#right"/></svg>Ray Visibility<i class="grip"></i></div>
            <div class="pn closed"><svg class="i c5"><use href="#right"/></svg>Settings<i class="grip"></i></div>
            <div class="pn open sunp">
              <div class="pnh"><svg class="i c5"><use href="#down"/></svg>Sun Position<i class="grip"></i></div>
              <div class="um">Usage Mode</div>
              <div class="seg"><span class="on">Normal</span><span>Sun + HDR texture</span></div>
              <div class="sr first"><label>Sun Object</label><span class="dk2"><svg class="i"><use href="#obj"/></svg><span>Sun</span><svg class="i c6"><use href="#x"/></svg></span></div>
              <div class="sr"><label>Collection</label><span class="dk2"><svg class="i"><use href="#collection"/></svg></span></div>
              <div class="sr"><label>Sky Texture</label><span class="dk2"><svg class="i"><use href="#tex"/></svg><span>Sky Texture</span><svg class="i c6"><use href="#x"/></svg></span></div>
              <div class="sub"><svg class="i c5"><use href="#down"/></svg>Location</div>
              <div class="um ec">Enter Coordinates</div>
              <div class="ll"><svg class="i"><use href="#latlon"/></svg></div>
              <div class="coords">
                <span class="fld"><span>Latitude</span><span>51.547</span></span>
                <span class="fld"><span>Longitude</span><span>-0.223</span></span>
                <span class="stack"><span class="btnc">Show North</span><span class="fld"><span>North Offset</span><span>0°</span></span></span>
                <span class="ro">51° 32' 47" N</span>
                <span class="ro">0° 13' 23" W</span>
              </div>
              <div class="azim">
                <span class="al">Azimuth:</span><span class="av">140.741°</span><span class="ref"><i class="cbx on"></i>Use refraction</span><span class="fld dist"><span>Distance</span><span>50 m</span></span>
              </div>
              <div class="azim el"><span class="al">Elevation:</span><span class="av">7.69°</span></div>
              <div class="sub tm2"><svg class="i c5"><use href="#down"/></svg>Time</div>
              <div class="times">
                <div class="tcol">
                  <span class="btnc hg"><svg class="i"><use href="#hourglass"/></svg>Use day of year</span>
                  <span class="fld"><span>Day</span><span>2</span></span>
                  <span class="fld"><span>Month</span><span>12</span></span>
                  <span class="fld"><span>Year</span><span>2022</span></span>
                </div>
                <div class="tcol">
                  <span class="fld"><span>Time</span><span>9.0000</span></span>
                  <span class="fld"><span>UTC zone</span><span>0.0</span></span>
                  <span class="dl"><i class="cbx"></i>Daylight savings</span>
                </div>
              </div>
            </div>
          </div>
        </div>
      </section>
    </aside>
  </main>

  <footer class="status">
    <span class="sh"><svg class="i"><use href="#mouse"/></svg>Scroller Activate</span>
    <span class="sh"><svg class="i"><use href="#mouse"/></svg>Scroller Activate</span>
    <span class="sh"><svg class="i"><use href="#mouse"/></svg>Node Context Menu</span>
    <span class="stats">Scene Collection | OsmBarsPubs | Verts:2,141,816 | Faces:1,268,089 | Tris:3,324,742 | Objects:1,757/1,767 | 3.3.1</span>
  </footer>
</div>
</body>
</html>
```
FILE: styles.css
```css
* { box-sizing: border-box; }
html, body { margin: 0; height: 100%; background: #181818; overflow: hidden; }
body { font: 5.7px "DejaVu Sans", "Liberation Sans", sans-serif; color: #c4c4c4; text-rendering: geometricPrecision; line-height: 1; }
.sprite { position: absolute; width: 0; height: 0; }
.app { width: 1920px; height: 768px; display: flex; flex-direction: column; filter: blur(.45px); }
.i { width: 8px; height: 8px; flex: none; display: block; color: #c6c6c6; }
.c6 { width: 6px; height: 6px; }
.c5 { width: 5px; height: 5px; }
.c4 { width: 4px; height: 4px; }
.org { color: #d9873c; } .grn { color: #14a27d; } .blu { color: #4f86d8; } .red { color: #c94b50; }
.push { margin-left: auto; }

/* top bar */
.topbar { height: 15px; flex: none; display: flex; align-items: center; background: #181818; position: relative; padding-top: 1px; }
.logo { margin-left: 6px; }
.mainmenu { display: flex; gap: 8.5px; margin-left: 5.5px; width: 121px; }
.tabs { display: flex; align-items: center; margin-left: -.5px; height: 14px; }
.tab { padding: 0 5.1px; height: 12.5px; line-height: 13.5px; border-radius: 2px 2px 0 0; color: #a4a4a4; }
.tab.on { background: #303030; color: #e0e0e0; padding: 0 7px; margin-right: 0; }
.selector { display: flex; align-items: center; height: 12px; background: #2a2a2a; border-radius: 2px; padding-left: 2px; }
.selector .i { width: 7px; height: 7px; }
.selector .d { width: 5px; height: 5px; margin-left: 1px; }
.selector .input { background: #1d1d1d; height: 12px; line-height: 12px; padding-left: 3px; border-radius: 1px; }
.scenesel { margin-left: auto; width: 104px; }
.scenesel .input { width: 57px; margin-left: 1px; margin-right: 1px; }
.layersel { margin-left: 4px; width: 98px; margin-right: 14px; }
.layersel .input { width: 66px; margin-left: 1px; }
.selector .ib { background: #4a4a4a; width: 10px; height: 12px; padding: 2px; margin-left: 2px; }
.selector .d2 { opacity: .35; margin-left: 2px; width: 6px; height: 6px; }

.work { flex: 1; min-height: 0; display: flex; gap: 2px; padding: 0 0 1px; }
.left { width: 1631px; flex: none; display: flex; flex-direction: column; gap: 2px; }
.upper { height: 682px; flex: none; display: flex; gap: 2px; }
.right { flex: 1; min-width: 0; display: flex; flex-direction: column; gap: 2px; }
.area { border-radius: 3px; overflow: hidden; position: relative; }

/* 3D viewport */
.view { width: 776px; flex: none; background: linear-gradient(115deg, #323232 0 40%, #3a3a3a 100%); }
.scene { position: absolute; left: 0; top: 0; width: 776px; height: 682px; }
.plane { fill: #a5a6a8; stroke: #bdbdbd; stroke-width: .6; }
.city { fill: #83807f; }
.core { fill: #000; }
.park { fill: #9d9d9f; }
.street { fill: none; stroke: #a2a1a3; stroke-width: 1.6; stroke-opacity: .45; }
.rv, .rv2, .rv3 { fill: none; stroke: #7b3c3d; stroke-linejoin: round; }
.rv { stroke-width: 3.2; }
.rv2 { stroke-width: 5.5; }
.rv3 { stroke-width: 8; }
.vh { position: relative; display: flex; align-items: center; height: 15px; padding: 0 6px 0 8px; background: #2b2b2b; }
.hb { display: inline-flex; align-items: center; justify-content: center; height: 11px; border-radius: 2px; background: #2f2f2f; flex: none; }
.hb .i { width: 7px; height: 7px; }
.hb .c5 { width: 5px; height: 5px; margin-left: 1px; }
.hb.flat { background: transparent; }
.w10 { width: 10px; } .w12 { width: 13px; } .w16 { width: 16px; } .c5w { width: 7px; }
.lit { background: #575757; }
.lit2 { background: #474747; }
.blue { background: #4772b3; }
.dim { opacity: .5; }
.modesel { width: 58px; margin-left: 7px; padding: 0 2px 0 3px; gap: 2px; justify-content: flex-start; }
.menus { display: flex; gap: 9px; }
.vh .menus { margin-left: 7.5px; width: 102px; }
.glob { width: 41px; margin-left: 125px; gap: 4px; padding: 0 3px; justify-content: flex-start; }
.vh .w16 { margin-left: 6px; }
.vh .lit { margin-left: 4px; }
.vh .lit + .flat { margin-left: 0; }
.rpush { margin-left: auto; }
.vh .blue { margin-left: 5px; }
.vh .lit2 { margin-left: 8px; }
.shade { display: flex; align-items: center; gap: 1.5px; background: #474747; height: 11px; margin-left: 3px; padding: 0 2px; border-radius: 2px; }
.shade .i { width: 9px; height: 9px; }
.shade .sel { background: #4772b3; border-radius: 2px; color: #fff; }
.vtool { position: relative; height: 13px; background: #303030; padding: 1px 0 0 25px; }
.selmodes { display: flex; height: 11px; width: 53px; gap: 0; background: #4a4a4a; border-radius: 2px; overflow: hidden; }
.selmodes span { width: 10.5px; display: flex; align-items: center; justify-content: center; background: #3d3d3d; margin-right: .5px; }
.selmodes .on { background: #3f66a8; }
.selmodes .i { width: 8px; height: 8px; }
.tools { position: absolute; left: 5px; top: 33px; display: flex; flex-direction: column; gap: 2.5px; width: 23px; }
.tg { display: flex; flex-direction: column; background: #2a2a2a; border-radius: 3px; }
.tool { height: 19.5px; display: flex; align-items: center; justify-content: center; border-radius: 3px; }
.tool.on { background: #4772b3; }
.t { width: 14px; height: 14px; display: block; }
.opts { position: absolute; left: 739px; top: 16px; width: 33px; height: 10px; display: flex; align-items: center; gap: 1.5px; justify-content: center; background: #2c2c2c; border-radius: 2px; }
.axes { position: absolute; left: 722px; top: 30px; width: 52px; height: 52px; }
.axes text { font: 700 6px "DejaVu Sans", sans-serif; text-anchor: middle; fill: #111; }
.nav3d { position: absolute; left: 757px; top: 79px; display: flex; flex-direction: column; gap: 2px; }
.nav3d span { width: 15px; height: 15px; border-radius: 50%; background: #2a2a2a; display: flex; align-items: center; justify-content: center; }
.nav3d .i { width: 10px; height: 10px; color: #e4e4e4; }

/* node editor */
.nodeed { flex: 1; background: #1d1d1d; }
.canvas { position: absolute; left: -778px; top: -15px; width: 1920px; height: 768px; background-image: radial-gradient(circle, #2a2a2a .6px, transparent .9px); background-size: 30px 30px; }
.links { position: absolute; left: 0; top: 0; width: 1920px; height: 768px; }
.links path { fill: none; stroke: #0ad0a0; stroke-width: 1.2; }
.node { position: absolute; width: 53px; background: #303030; border-radius: 1.5px; box-shadow: 0 1px 2px rgba(0,0,0,.55); font-size: 3.5px; color: #c6c6c6; }
.nh { height: 7.3px; display: flex; align-items: center; background: #1d7560; border-radius: 1.5px 1.5px 0 0; color: #cfe0da; padding-left: 3px; }
.nh.dark { background: #1c1c1c; }
.nc { width: 2.4px; height: 2.4px; border: solid #d0d0d0; border-width: 0 .5px .5px 0; transform: rotate(45deg) translate(-.4px,-.4px); margin-right: 3px; flex: none; }
.nb { padding: 1.5px 4.2px 2px; }
.r { height: 8.4px; display: flex; align-items: center; position: relative; white-space: nowrap; }
.o { justify-content: flex-end; }
.o + :not(.o) { margin-top: .9px; }
.s { position: absolute; width: 3px; height: 3px; border-radius: 50%; left: -5.7px; top: 2.7px; }
.o .s { left: auto; right: -5.7px; }
.sg { background: #00d6a3; } .sb { background: #cca6d6; } .sv { background: #6363c7; } .sf { background: #a1a1a1; } .si { background: #598c5c; } .sm { background: #eb7582; }
.hollow { background: #1d1d1d; border: .6px solid #777; }
.multi { width: 2.4px; height: 8px; top: .2px; left: -5.4px; border-radius: .8px; }
.f { flex: 1; height: 6.6px; background: #545454; border-radius: 1px; display: flex; align-items: center; justify-content: space-between; padding: 0 3.5px 0 4.5px; color: #d0d0d0; white-space: nowrap; overflow: hidden; }
.vec { display: flex; flex-direction: column; gap: .5px; margin: -.4px 0 1px; }
.vec .f { flex: none; height: 7px; }
.vec .f:first-child { border-radius: 1px 1px 0 0; } .vec .f:last-child { border-radius: 0 0 1px 1px; }
.cb { width: 4.4px; height: 4.4px; border-radius: .7px; background: #545454; margin-right: 1.6px; flex: none; }
.cb.on { background: #4772b3; position: relative; }
.cb.on::after { content: ""; position: absolute; left: 1.2px; top: .3px; width: 1.3px; height: 2.6px; border: solid #fff; border-width: 0 .6px .6px 0; transform: rotate(40deg); }
.drop { height: 7px; margin: 3px 0 2px; background: #1d1d1d; border-radius: 1px; display: flex; align-items: center; justify-content: space-between; padding: 0 1.5px 0 2px; }
.drop.labeled { margin: 4px 0 2px; background: none; padding: 0 0 0 .5px; }
.drop em { font-style: normal; width: 14px; flex: none; }
.ddv { flex: 1; height: 7px; background: #1d1d1d; border-radius: 1px; display: flex; align-items: center; justify-content: space-between; padding: 0 1.5px; }
.mf { flex: 1; height: 7px; background: #1d1d1d; border-radius: 1px; display: flex; align-items: center; gap: 1.5px; padding: 0 1px; }
.c5w2 { width: 5.6px; height: 5.6px; }
.mx { margin-left: auto; }
.jb .o + .r { margin-top: 2.2px; }
.n-ico { left: 971.7px; top: 149.3px; }
.n-gi { left: 862.3px; top: 265px; height: 27px; }
.n-mtp { left: 970.7px; top: 264.7px; }
.n-iop1 { left: 1083.3px; top: 141.7px; }
.n-tr1 { left: 1175.7px; top: 145.7px; }
.n-iop2 { left: 1134.3px; top: 280.7px; }
.n-iop3 { left: 1140.3px; top: 421.3px; }
.n-cone1 { left: 990px; top: 364.7px; }
.n-cone2 { left: 1000px; top: 481.7px; }
.n-tr2 { left: 1224.3px; top: 367.3px; }
.n-sm1 { left: 1256.3px; top: 156.3px; }
.n-sm2 { left: 1215.3px; top: 277px; }
.n-sm3 { left: 1309px; top: 308.7px; }
.n-sss { left: 1293px; top: 240.7px; }
.n-join { left: 1476.3px; top: 225.3px; }
.n-go { left: 1548.3px; top: 237px; height: 27px; }
.nh-bar { position: relative; display: flex; align-items: center; height: 15px; background: #242424; padding: 0 3px 0 5px; }
.nm { margin-left: 8px; width: 332px; }
.nh-bar .menus { gap: 10px; }
.dblock { display: flex; align-items: center; height: 11px; width: 116px; margin-left: -1px; }
.di { width: 16px; height: 11px; display: flex; align-items: center; justify-content: center; background: #2f2f2f; border-radius: 2px 0 0 2px; gap: 1px; }
.di .i { width: 7px; height: 7px; }
.dn { width: 68px; height: 11px; line-height: 11px; background: #1d1d1d; padding-left: 3px; }
.dbtn { flex: 1; height: 11px; display: flex; align-items: center; justify-content: space-around; background: #4a4a4a; border-radius: 0 2px 2px 0; padding: 0 2px; }
.dbtn .i { width: 7px; height: 7px; } .dbtn .c6 { width: 5px; height: 5px; }
.pinn { margin-left: 4px; color: #888; }
.rgrp { margin-left: auto; display: flex; align-items: center; gap: 3px; }
.rgrp .i { width: 7px; height: 7px; }
.fade { opacity: .35; }
.crumbs { position: absolute; left: 0; top: 22px; display: flex; align-items: center; }
.crumbs .c5 { margin: 0 5px 0 0; }
.crumbs span { margin: 0 10.5px 0 3px; }
.crumbs .c5:first-child { margin-right: 5px; margin-left: 0; }

/* timeline */
.timeline { flex: 1; background: #232323; display: flex; flex-direction: column; }
.th { height: 14px; flex: none; background: #282828; display: flex; align-items: center; padding-left: 6px; }
.thl { display: flex; align-items: center; width: 16px; gap: 1px; }
.ed { color: #eee; }
.pop { display: inline-flex; align-items: center; gap: 1.5px; background: #383838; height: 10px; padding: 0 2px; border-radius: 2px; margin-left: 5px; }
.pop + .pop { margin-left: 2px; }
.tm { margin-left: 6px; gap: 8px; width: 662px; }
.rec { width: 11px; height: 10px; background: #4a4a4a; border-radius: 2px; display: flex; align-items: center; justify-content: center; }
.rec .i { width: 7px; height: 7px; }
.dimmer { opacity: .4; margin: 0 1.5px; }
.transport { display: flex; align-items: center; background: #4a4a4a; height: 11px; padding: 0 1.5px; border-radius: 2px; gap: 2.8px; margin-left: 8px; }
.transport .i { width: 8px; height: 8px; }
.frame { width: 41px; height: 11px; line-height: 11px; background: #545454; text-align: center; border-radius: 2px; margin-left: 584px; }
.sw { margin-left: 6px; width: 8px; height: 8px; }
.se { display: flex; justify-content: space-between; align-items: center; width: 43px; height: 11px; padding: 0 3px 0 4px; background: #545454; border-radius: 2px 0 0 2px; margin-left: 3px; }
.se.e { width: 46px; margin-left: 2px; border-radius: 0 2px 2px 0; }
.rng { width: 11px; height: 11px; background: #545454; border-radius: 2px; display: flex; align-items: center; justify-content: center; margin-left: 4px; }
.rng .i { width: 7px; height: 7px; }
.lk { display: flex; align-items: center; gap: 1px; margin-left: 12px; }
.lk .i:first-child { color: #eee; width: 9px; height: 9px; }
.ruler { height: 12px; flex: none; display: flex; padding-left: 8.3px; background: #1f1f1f; }
.ruler span { width: 30.34px; flex: none; text-align: center; line-height: 12px; color: #bdbdbd; }
.tracks { flex: 1; background-image: repeating-linear-gradient(90deg, #262626 0 .8px, transparent .8px 30.34px), linear-gradient(90deg, #232323 60px, #2e2e2e 60px, #2e2e2e 782px, #232323 782px); background-position: 23.5px 0, 0 0; }
.scroller { height: 8px; flex: none; background: #1c1c1c; padding: 0; position: relative; }
.scroller::before { content: ""; position: absolute; left: 6px; right: 5px; top: 1px; height: 5px; border-radius: 3px; background: #545454; }
.playhead { position: absolute; left: 60px; top: 16px; bottom: 6px; width: .8px; background: #4772b3; }
.playhead span { position: absolute; left: -6px; top: 0; width: 13px; height: 9px; line-height: 9px; text-align: center; background: #4772b3; color: #fff; border-radius: 2.5px; }

/* outliner */
.outliner { height: 294px; flex: none; background: #282828; }
.oh { height: 15px; display: flex; align-items: center; padding: 0 3px 0 6px; background: #2a2a2a; }
.oh .w16 + .w16 { margin-left: 4px; }
.osearch { width: 61px; height: 11px; background: #1d1d1d; border-radius: 2px; margin-left: 63px; margin-right: auto; display: flex; align-items: center; padding-left: 2px; }
.osearch .i { width: 7px; height: 7px; }
.oh .lit { margin-left: 4px; }
.otree { padding-top: 0; }
.kids { position: relative; }
.kids::before { content: ""; position: absolute; left: 16.5px; top: 0; bottom: 5px; width: .6px; background: #4a4a4a; }
.row { height: 11.2px; display: flex; align-items: center; white-space: nowrap; background: #282828; position: relative; }
.otree .row:nth-child(even), .kids .row:nth-child(even) { background: #2d2d2d; }
.row.l0 { padding-left: 12px; }
.row.l1 { padding-left: 12px; }
.row.l2 { padding-left: 23px; }
.row.l2.noar { padding-left: 35px; }
.row.l0 .nm { margin-left: .5px; width: auto; }
.wbox { background: #4a4a4a; border-radius: 1px; margin-right: 0; }
.row .nm { margin-left: 3.6px; width: auto; color: #c6c6c6; }
.ar { width: 8px; height: 8px; margin-right: 4px; color: #a8a8a8; flex: none; padding: 1.3px; }
.chips { display: flex; gap: 3px; margin-left: 8.5px; }
.rt { margin-left: auto; padding-right: 6px; display: flex; gap: 3px; }
.row.dim { opacity: 1; }
.row.dim .nm, .row.dim .ar, .row.dim > .i, .row.dim .chips, .row.dim .rt .i { opacity: .45; }
.row.dim .rt .bright { opacity: 1; }
.row.active { background: #334d80 !important; height: 11.7px; }
.row.active .nm { color: #e6a050; }
.icbox { background: rgba(255,255,255,.18); border-radius: 1.5px; }
.chipbox { background: #2a6b5c; border-radius: 1.5px; }

/* properties */
.props { flex: 1; background: #2f2f2f; }
.ph { height: 12px; display: flex; align-items: center; padding: 0 4px 0 6px; background: #2f2f2f; }
.ph .hb { height: 10px; }
.psearch { width: 60px; height: 9px; background: #1d1d1d; border-radius: 2px; margin-left: 92px; margin-right: auto; display: flex; align-items: center; padding-left: 3px; }
.psearch .i { width: 7px; height: 7px; }
.pbody { display: flex; }
.ptabs { width: 16px; flex: none; background: #232323; display: flex; flex-direction: column; align-items: center; padding-top: 9px; height: 450px; border-radius: 0 3px 0 0; }
.tb { margin-bottom: 7.7px; }
.tb.gap { margin-top: 4px; }
.tbon { width: 16px; height: 15px; background: #3b3b3b; display: flex; align-items: center; justify-content: center; border-radius: 2px 0 0 2px; margin: -3px 0 5px; }
.pcontent { flex: 1; padding: 0 3.5px 0 4px; min-width: 0; }
.pcrumb { height: 12px; margin-top: 6.5px; display: flex; align-items: center; padding-left: 2px; }
.pcrumb .i { width: 8px; height: 8px; }
.pcrumb .c5 { width: 5px; height: 5px; margin: 0 4px 0 9px; }
.pcrumb span { margin-left: 5px; }
.ppin { margin-left: auto; margin-right: 1px; color: #888; }
.wsel { display: flex; height: 10px; margin-top: 9px; align-items: center; }
.wi { width: 16px; height: 10px; display: flex; align-items: center; gap: 1px; background: #3a3a3a; border-radius: 2px 0 0 2px; padding-left: 1.5px; }
.wi .i { width: 7.5px; height: 7.5px; }
.wn { flex: 1; height: 10px; line-height: 10px; background: #1d1d1d; padding-left: 4px; }
.wb { width: 33px; height: 10px; display: flex; align-items: center; justify-content: space-around; background: #4a4a4a; border-radius: 0 2px 2px 0; }
.wb .i { width: 7.5px; height: 7.5px; } .wb .c6 { width: 5px; height: 5px; }
.pn { background: #3b3b3b; border-radius: 2px; margin-bottom: 1.3px; position: relative; }
.closed, .pnh { height: 13.7px; display: flex; align-items: center; padding-left: 5px; gap: 3px; }
.wsel + .closed { margin-top: 6.5px; }
.grip { position: absolute; right: 2px; top: 5px; width: 7px; height: 2.5px; border-top: .5px solid #4c4c4c; border-bottom: .5px solid #4c4c4c; }
.surf { height: 67.7px; }
.fr { display: flex; align-items: center; height: 10px; margin-top: 4.7px; position: relative; }
.fr label { width: 99px; text-align: right; flex: none; margin-right: 5px; }
.fr.m10 { margin-top: 10.3px; }
.fr.m4 { margin-top: 4px; }
.dk { width: 142px; height: 10px; background: #1d1d1d; border-radius: 2px; display: flex; align-items: center; gap: 4px; padding-left: 3.5px; }
.lnk { background: #2f3f5e; }
.dot { width: 3.4px; height: 3.4px; border-radius: 50%; flex: none; display: block; }
.dg { background: #63c763; } .dy { background: #c7c729; } .dw { background: #d0d0d0; }
.marker { position: absolute; left: 4px; top: 2px; width: 6px; height: 6px; color: #ddd; }
.strength { width: 142px; height: 10px; display: flex; }
.sdot { width: 10.5px; height: 10px; background: #2a2a2a; border-radius: 2px 0 0 2px; display: flex; align-items: center; justify-content: center; }
.sval { flex: 1; background: #545454; text-align: center; line-height: 10px; border-radius: 0 2px 2px 0; }
.after { margin-left: 5px; width: 2.5px; height: 2.5px; }
.sunp { height: 300px; }
.um { height: 9px; line-height: 9px; margin: 5.3px 0 0 5px; }
.seg { display: flex; height: 10.3px; margin: 1.7px 5px 0; line-height: 10.3px; text-align: center; }
.seg span { flex: 1; background: #545454; border-radius: 0 2px 2px 0; }
.seg .on { background: #4772b3; color: #eee; border-radius: 2px 0 0 2px; }
.sr { display: flex; height: 10px; margin-top: 4.5px; align-items: center; }
.sr.first { margin-top: 7.3px; }
.sr label { width: 104px; text-align: right; flex: none; margin-right: 5px; }
.dk2 { width: 148px; height: 10px; background: #1d1d1d; border-radius: 2px; display: flex; align-items: center; padding: 0 4px 0 2px; gap: 3px; }
.dk2 .c6 { margin-left: auto; width: 5px; height: 5px; }
.sub { height: 12.7px; margin-top: 5.7px; background: #363636; display: flex; align-items: center; padding-left: 12px; gap: 3px; }
.ec { margin-top: 5.8px; }
.ll { height: 10px; margin: 1.8px 6px 0 5px; background: #1d1d1d; border-radius: 2px; padding: 1px 0 0 2px; }
.coords { display: grid; grid-template-columns: 82px 81px 81px; column-gap: 4px; margin: 10px 0 0 5px; }
.fld { display: flex; flex: none; align-items: center; justify-content: space-between; height: 10.4px; background: #545454; padding: 0 4.5px 0 8.5px; border-radius: 2px; }
.coords .stack { grid-row: 1 / span 2; grid-column: 3; display: flex; flex-direction: column; gap: .4px; }
.btnc { flex: none; height: 10.4px; background: #545454; text-align: center; line-height: 10.4px; border-radius: 2px 2px 0 0; display: block; }
.stack .fld { border-radius: 0 0 2px 2px; }
.coords .ro { grid-row: 2; text-align: right; line-height: 10.4px; padding-right: 1px; }
.azim { display: flex; align-items: center; height: 10px; margin: 6px 0 0 5px; }
.al { width: 35px; } .av { width: 51px; }
.ref { display: flex; align-items: center; gap: 2px; width: 86px; }
.cbx { width: 6.5px; height: 6.5px; border-radius: 1px; background: #545454; position: relative; flex: none; }
.cbx.on { background: #4772b3; }
.cbx.on::after { content: ""; position: absolute; left: 2.2px; top: .7px; width: 1.8px; height: 3.6px; border: solid #fff; border-width: 0 .9px .9px 0; transform: rotate(40deg); }
.dist { width: 81px; }
.el { margin-top: 1.5px; }
.tm2 { margin-top: 8px; height: 14.4px; }
.times { display: grid; grid-template-columns: 123.5px 124px; column-gap: 5.5px; margin: 5px 0 0 5px; }
.tcol { display: flex; flex-direction: column; gap: .4px; }
.tcol .fld { border-radius: 0; }
.hg { display: flex; align-items: center; padding-left: 2px; }
.hg .i { width: 8px; height: 8px; margin-right: 33px; }
.dl { display: flex; align-items: center; gap: 2px; height: 14px; margin-top: 1px; }

/* status bar */
.status { height: 11px; flex: none; display: flex; align-items: center; background: #181818; padding: 0 5px 0 6px; color: #9a9a9a; }
.status .i { width: 7px; height: 7px; color: #a8a8a8; }
.sh { display: flex; align-items: center; gap: 3px; width: 118px; }
.stats { margin-left: auto; color: #9a9a9a; }
```
